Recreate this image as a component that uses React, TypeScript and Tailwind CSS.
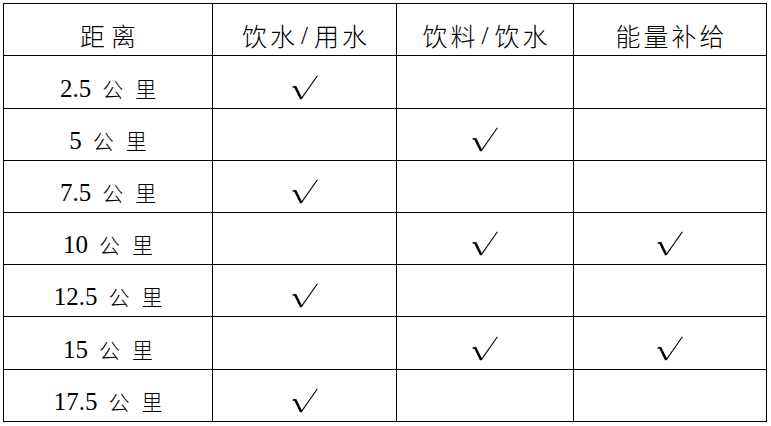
import React from "react";

const Check = () => (
  <svg width="26" height="25" viewBox="0 0 26 25" fill="none" stroke="#000">
    <path d="M0.6 12.4 L3 11.3" strokeWidth="1.3" />
    <path d="M3 11.3 L9.2 23.9" strokeWidth="2.5" />
    <path d="M9.2 23.9 L25.4 0.8" strokeWidth="1.1" />
  </svg>
);

const cjk = { fontFamily: '"Noto Sans CJK SC", "Noto Sans", sans-serif' };
const serif = { fontFamily: '"Liberation Serif", "Times New Roman", serif' };

const rows: { d: string; c: [boolean, boolean, boolean] }[] = [
  { d: "2.5", c: [true, false, false] },
  { d: "5", c: [false, true, false] },
  { d: "7.5", c: [true, false, false] },
  { d: "10", c: [false, true, true] },
  { d: "12.5", c: [true, false, false] },
  { d: "15", c: [false, true, true] },
  { d: "17.5", c: [true, false, false] },
];

const Header = ({ children, wide }: { children: React.ReactNode; wide?: boolean }) => (
  <div className="bg-white flex items-center justify-center pt-[12px]">
    <div
      className={
        wide
          ? "flex items-center text-[25px] leading-none font-light tracking-[6px] pl-[6px] text-black"
          : "flex items-center text-[25px] leading-none font-light tracking-[3px] pl-[3px] text-black"
      }
      style={cjk}
    >
      {children}
    </div>
  </div>
);

export default function App() {
  return (
    <div className="w-[771px] h-[426px] bg-white pl-[3px] pt-[3px]">
      <div className="grid w-fit grid-cols-[208px_183px_176px_192px] grid-rows-[51px_52px_51px_51px_51px_51px_52px_51px] gap-px bg-black p-px">
        <Header wide>距离</Header>
        <Header>
          <span>饮水</span>
          <span className="mx-[3px]" style={serif}>/</span>
          <span>用水</span>
        </Header>
        <Header>
          <span>饮料</span>
          <span className="mx-[3px]" style={serif}>/</span>
          <span>饮水</span>
        </Header>
        <Header>能量补给</Header>
        {rows.map((r) => (
          <React.Fragment key={r.d}>
            <div className="bg-white flex items-center justify-center pt-[12px]">
              <div className="flex items-center text-black">
                <span className="text-[25px] leading-none" style={serif}>
                  {r.d}
                </span>
                <span className="ml-[11px] text-[21px] leading-none font-light" style={cjk}>
                  公
                </span>
                <span className="ml-[12px] text-[21px] leading-none font-light" style={cjk}>
                  里
                </span>
              </div>
            </div>
            {r.c.map((v, i) => (
              <div key={i} className="bg-white flex items-center justify-center pt-[10px]">
                {v ? <Check /> : null}
              </div>
            ))}
          </React.Fragment>
        ))}
      </div>
    </div>
  );
}
